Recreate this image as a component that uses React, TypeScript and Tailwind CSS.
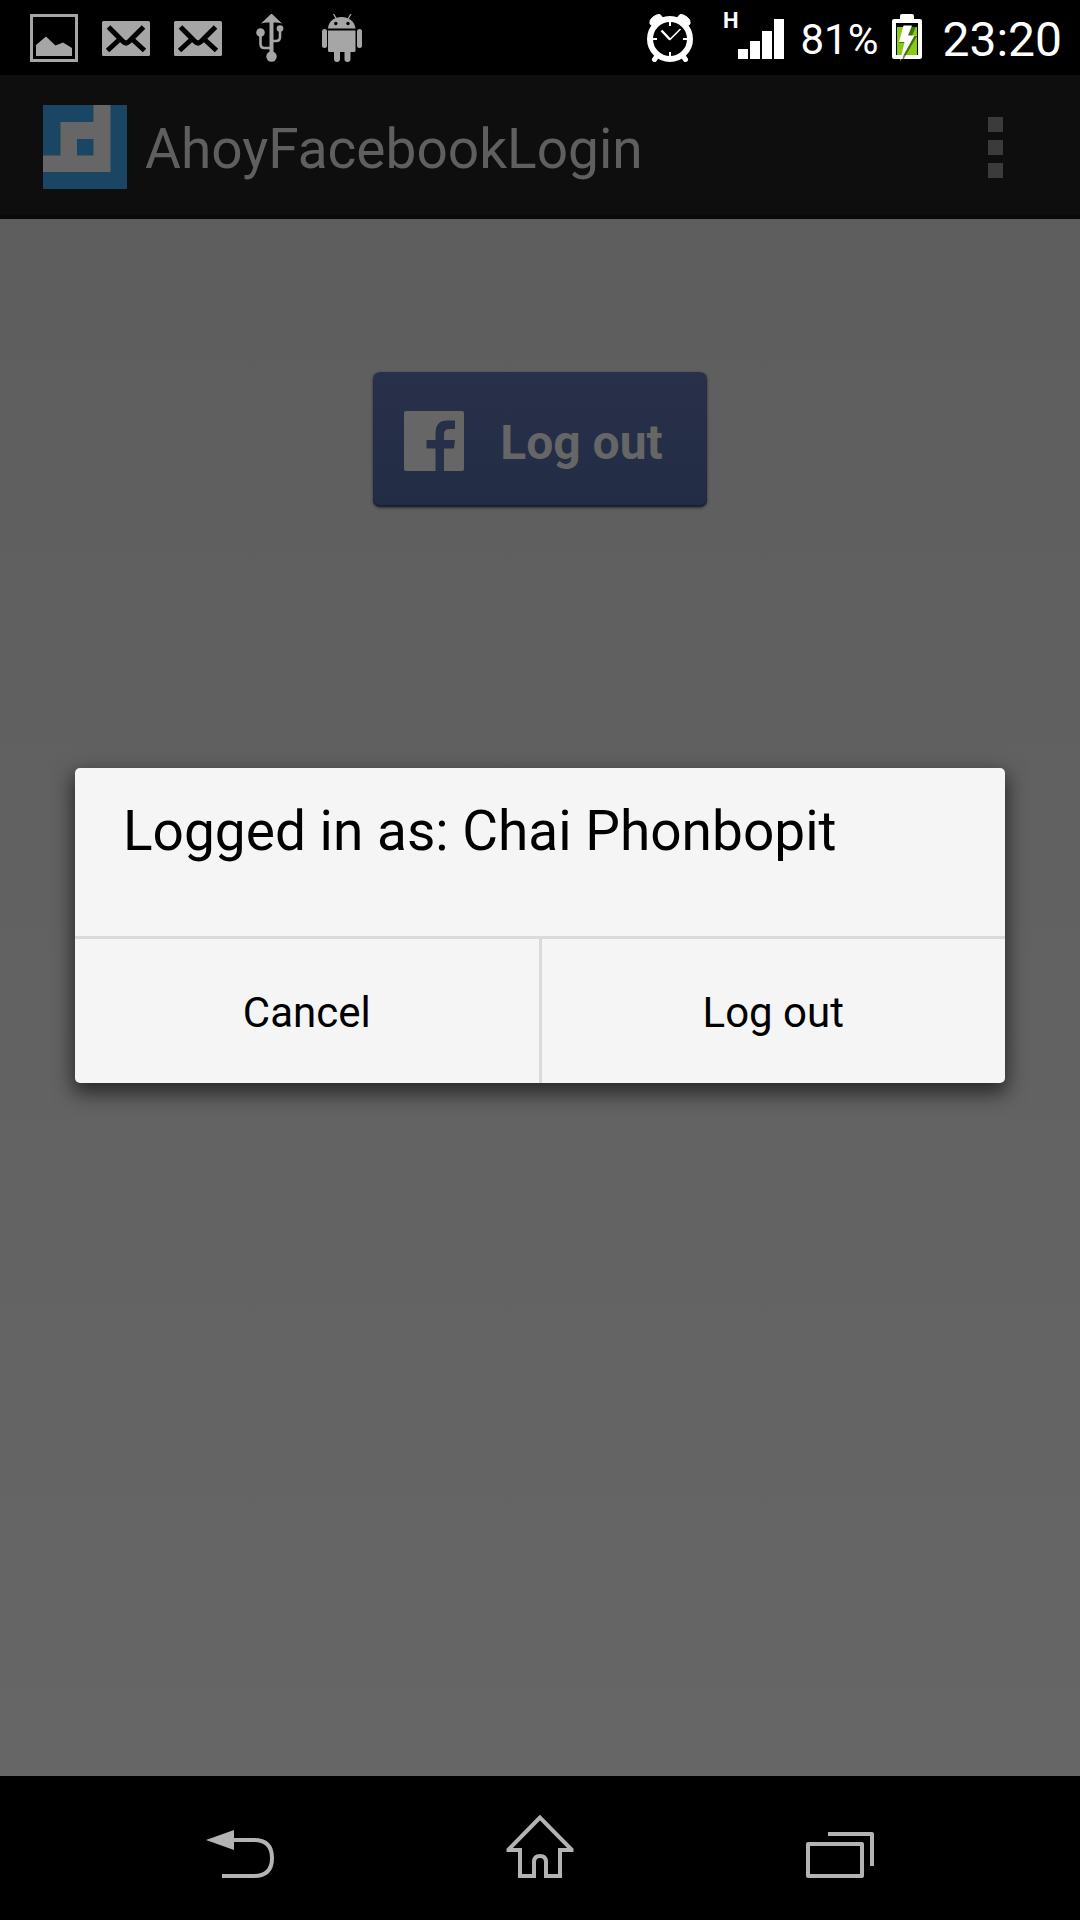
import React from "react";

function PictureIcon() {
  return (
    <svg viewBox="0 0 48 48" className="size-12" aria-hidden="true">
      <rect x="1.5" y="1.5" width="45" height="45" fill="none" stroke="#a6a6a6" strokeWidth="3" />
      <path d="M6 42V31L16 22.500L25.500 31.500L33 28.500L42 34V42Z" fill="#a6a6a6" />
    </svg>
  );
}

function MailIcon() {
  return (
    <svg viewBox="0 0 48 48" className="size-12" aria-hidden="true">
      <rect x="0" y="7" width="48" height="35" rx="1.5" fill="#a6a6a6" />
      <path d="M6.500 13L21 27.500Q24 30.500 27 27.500L41.500 13M5.500 36.500L17.500 25.500M42.500 36.500L30.500 25.500" fill="none" stroke="#000" strokeWidth="5" />
    </svg>
  );
}

function UsbIcon() {
  return (
    <svg viewBox="0 0 48 48" className="size-12" aria-hidden="true">
      <path d="M25.500 -0.500L36 9.500Q31 8 27.500 8.500V40H23.500V8.500Q20 8 15 9.500Z" fill="#a6a6a6" />
      <circle cx="25.500" cy="42.500" r="5.200" fill="#a6a6a6" />
      <circle cx="14.500" cy="18.500" r="4.300" fill="#a6a6a6" />
      <circle cx="34" cy="14.500" r="3.300" fill="#a6a6a6" />
      <path d="M14.500 19V30Q14.500 34 18.500 34H25M34 15V23Q34 27 30 27H26" fill="none" stroke="#a6a6a6" strokeWidth="2.600" />
    </svg>
  );
}

function AndroidIcon() {
  return (
    <svg viewBox="0 0 48 48" className="size-12" aria-hidden="true">
      <g fill="#a6a6a6">
        <path d="M10 14.500C10.500 7 16.500 3 23.500 3S36.500 7 37.500 14.500Z" />
        <path d="M10 16.500H37.500V36.500Q37.500 38 36 38H32.500V45Q32.500 48 29.500 48T26.500 45V38H22V45Q22 48 19 48T16 45V38H11.500Q10 38 10 36.500Z" />
        <rect x="4" y="15" width="5" height="19" rx="2.500" />
        <rect x="39" y="15" width="5" height="19" rx="2.500" />
      </g>
      <path d="M15.500 0L18.500 5M33 0L30 5" stroke="#a6a6a6" strokeWidth="1.300" />
      <circle cx="17.800" cy="9.500" r="1.700" fill="#000" />
      <circle cx="30" cy="9.500" r="1.700" fill="#000" />
    </svg>
  );
}

function AlarmIcon() {
  return (
    <svg viewBox="0 0 46 48" className="h-12 w-[46px]" aria-hidden="true">
      <path d="M3 10Q2 6 6 3T13 0.500L16 4L6 12ZM43 10Q44 6 40 3T33 0.500L30 4L40 12Z" fill="#fff" stroke="#fff" strokeWidth="1" strokeLinejoin="round" />
      <circle cx="23" cy="25" r="20" fill="none" stroke="#fff" strokeWidth="6" />
      <path d="M10 42L7.500 45.500M36 42L38.500 45.500" stroke="#fff" strokeWidth="5" strokeLinecap="round" />
      <path d="M23 7V12M23 38V43M5 25H10M36 25H41" stroke="#fff" strokeWidth="2" />
      <path d="M14.500 16.500L23 25.500" stroke="#fff" strokeWidth="2.500" fill="none" />
      <path d="M22.500 26L33.500 15" stroke="#fff" strokeWidth="1.600" fill="none" />
    </svg>
  );
}

function SignalIcon() {
  return (
    <svg viewBox="0 0 46 40" className="h-10 w-[46px]" aria-hidden="true">
      <path d="M0 30H10V40H0ZM12 22H22V40H12ZM24 12H34V40H24ZM36 0H46V40H36Z" fill="#fff" />
    </svg>
  );
}

function BatteryIcon() {
  return (
    <svg viewBox="0 0 30 48" className="h-12 w-[30px]" aria-hidden="true">
      <path d="M8 5V2Q8 0 10 0H20Q22 0 22 2V5Z" fill="#fff" />
      <rect x="2" y="7" width="26" height="36" fill="#000" stroke="#fff" strokeWidth="4" strokeLinejoin="round" />
      <rect x="5" y="13" width="20" height="28" fill="#86cc14" />
      <path d="M13 12.500H24L20 22H25L10 48L13 29H7Z" fill="#1d3300" opacity="0.600" />
      <path d="M11.500 11.500H20L16 21.500H22.500L8 47.500L12.500 28H7Z" fill="#fff" />
    </svg>
  );
}

function AppLogo() {
  return (
    <svg viewBox="0 0 84 84" className="size-[84px]" aria-hidden="true">
      <rect width="84" height="84" fill="#1a4664" />
      <path fillRule="evenodd" d="M50.500 0H67.500V67H0V50.500H17.500V17H50.500ZM34 34V50.500H50.500V34Z" fill="#666" />
    </svg>
  );
}

function FacebookIcon() {
  return (
    <svg viewBox="0 0 60 60" className="size-[60px]" aria-hidden="true">
      <rect width="60" height="60" rx="2" fill="#666" />
      <path d="M31.500 60V37.500H22.500V29H31.500V22.500Q31.500 9.500 43 9.500H51V18H45.500Q40 18 40 23V29H51L50 37.500H40V60Z" fill="#263049" />
    </svg>
  );
}

function BackIcon() {
  return (
    <svg viewBox="0 0 72 72" className="size-[72px]" fill="none" aria-hidden="true">
      <path d="M28 28H50Q68 28 68 46T50 64H18" stroke="#b3b3b3" strokeWidth="4" />
      <path d="M2 28L30 18V38Z" fill="#b3b3b3" />
    </svg>
  );
}

function HomeIcon() {
  return (
    <svg viewBox="0 0 72 72" className="size-[72px]" fill="none" aria-hidden="true">
      <path d="M36 5.500L4.500 37.500V38H16V64H30V50Q30 44 36 44T42 50V64H56V38H67.500V37.500Z" stroke="#b3b3b3" strokeWidth="4" />
    </svg>
  );
}

function RecentsIcon() {
  return (
    <svg viewBox="0 0 72 72" className="size-[72px]" fill="none" stroke="#b3b3b3" strokeWidth="4" strokeLinejoin="round" aria-hidden="true">
      <rect x="4" y="32" width="54" height="32" />
      <path d="M24 22H68V54" />
    </svg>
  );
}

function StatusBar() {
  return (
    <header className="flex h-[75px] items-center justify-between bg-black pr-[18px] pl-[30px] text-white">
      <div className="flex items-center gap-6">
        <PictureIcon />
        <MailIcon />
        <MailIcon />
        <UsbIcon />
        <AndroidIcon />
      </div>
      <div className="flex items-center">
        <AlarmIcon />
        <div className="ml-[30px] flex h-[50px] items-start">
          <span className="text-[22px] leading-4 font-bold">H</span>
          <span className="pt-[6px]">
            <SignalIcon />
          </span>
        </div>
        <span className="ml-4 pt-1 text-[42px] leading-none">81%</span>
        <span className="ml-[14px]">
          <BatteryIcon />
        </span>
        <time className="ml-5 pt-1 text-[48px] leading-none">23:20</time>
      </div>
    </header>
  );
}

function ActionBar() {
  return (
    <div className="flex h-36 items-center border-b-4 border-[#0a0a0a] bg-[#0e0e0e] pt-1 pr-[77px] pl-[43px]">
      <AppLogo />
      <h1 className="ml-[18px] flex-1 pt-1 text-[55px] leading-none text-[#5f5f5f]">AhoyFacebookLogin</h1>
      <button type="button" aria-label="More options" className="flex flex-col gap-2">
        <i className="size-[15px] bg-[#3b3b3b]" />
        <i className="size-[15px] bg-[#3b3b3b]" />
        <i className="size-[15px] bg-[#3b3b3b]" />
      </button>
    </div>
  );
}

function LoginDialog() {
  return (
    <div className="absolute inset-0 flex items-center px-[75px]">
      <section
        role="dialog"
        aria-labelledby="dialog-title"
        className="w-full overflow-hidden rounded-[5px] bg-[#f5f5f5] text-black shadow-[0_8px_20px_2px_rgba(0,0,0,0.6)]"
      >
        <h2 id="dialog-title" className="h-[168px] px-12 pt-9 text-[55px] leading-[54px]">
          Logged in as: Chai Phonbopit
        </h2>
        <div className="flex divide-x-3 divide-[#dadada] border-t-3 border-[#dadada] text-[42px]">
          <button type="button" className="h-36 flex-1 pt-0.5">Cancel</button>
          <button type="button" className="h-36 flex-1 pt-0.5">Log out</button>
        </div>
      </section>
    </div>
  );
}

function NavigationBar() {
  return (
    <nav className="flex h-36 items-center justify-center gap-[228px] bg-black">
      <button type="button" aria-label="Back"><BackIcon /></button>
      <button type="button" aria-label="Home"><HomeIcon /></button>
      <button type="button" aria-label="Recent apps"><RecentsIcon /></button>
    </nav>
  );
}

export default function App() {
  return (
    <div className="flex min-h-screen flex-col bg-black font-[Roboto,sans-serif]">
      <StatusBar />
      <main className="relative flex flex-1 flex-col bg-linear-to-b from-[#5d5d5d] to-[#666666]">
        <ActionBar />
        <div className="flex justify-center pt-[153px]">
          <button
            type="button"
            className="flex h-[135px] items-center gap-9 rounded-[7px] bg-linear-to-b from-[#283149] to-[#232c45] pt-0.5 pr-11 pl-[31px] text-[48px] font-bold text-[#666] shadow-[0_1px_3px_rgba(0,0,0,0.5),inset_0_-2px_1px_#19223a]"
          >
            <FacebookIcon />
            <span className="pt-1">Log out</span>
          </button>
        </div>
        <LoginDialog />
      </main>
      <NavigationBar />
    </div>
  );
}
